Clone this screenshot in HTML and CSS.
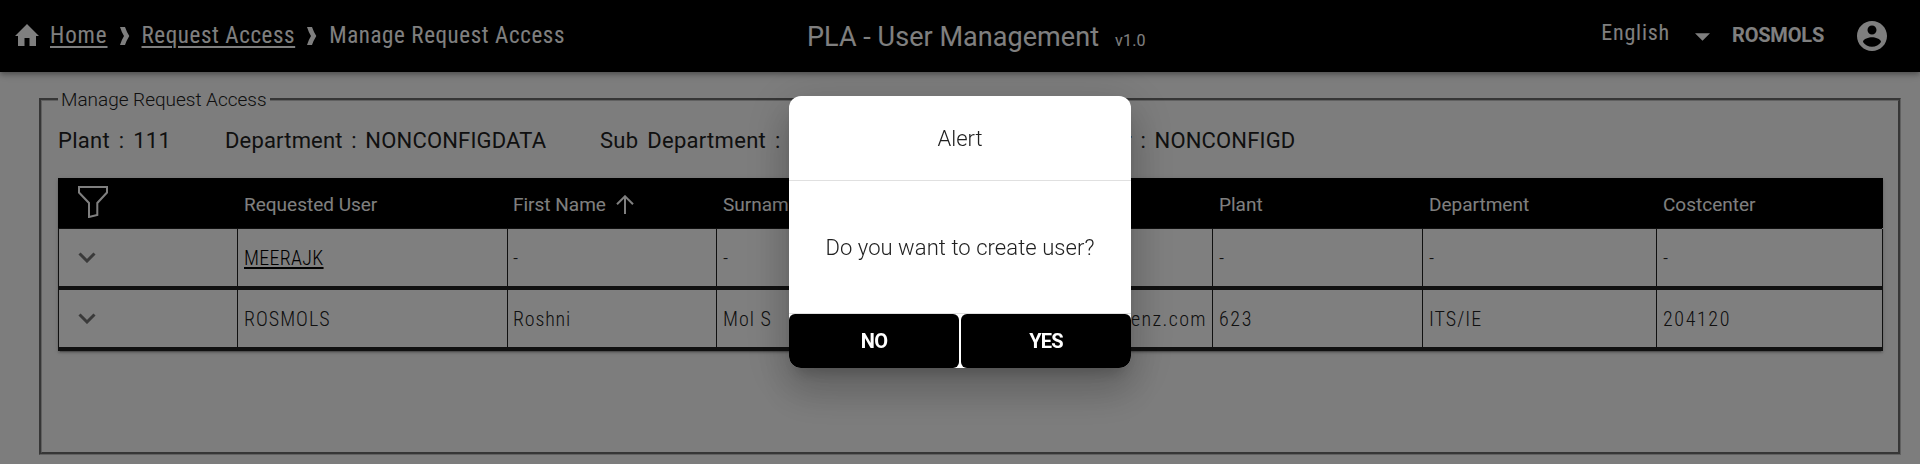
FILE: index.html
```html
<!DOCTYPE html>
<html lang="en">
<head>
<meta charset="utf-8">
<title>PLA - User Management</title>
<link rel="stylesheet" href="styles.css">
</head>
<body>
<header class="topbar">
  <nav class="breadcrumb">
    <svg class="home-icon" viewBox="0 0 24 22"><path fill="currentColor" d="M12 0 24 12h-3v10h-6.500v-8h-5v8H3V12H0z"/></svg>
    <a class="crumb crumb-home" href="#">Home</a>
    <svg class="sep" viewBox="0 0 10 18"><path fill="currentColor" d="M0 0h5Q6.500 4.500 9.300 9 6.500 13.500 5 18H0Q1.500 13 4 9 1.500 5 0 0z"/></svg>
    <a class="crumb crumb-request" href="#">Request Access</a>
    <svg class="sep" viewBox="0 0 10 18"><path fill="currentColor" d="M0 0h5Q6.500 4.500 9.300 9 6.500 13.500 5 18H0Q1.500 13 4 9 1.500 5 0 0z"/></svg>
    <span class="crumb">Manage Request Access</span>
  </nav>
  <div class="brand"><span class="brand-name">PLA - User Management</span><span class="version">v1.0</span></div>
  <div class="account">
    <span class="language">English</span>
    <svg class="caret" viewBox="0 0 14 7"><path fill="currentColor" d="M0 0h14L7 7z"/></svg>
    <span class="username">ROSMOLS</span>
    <svg class="avatar" viewBox="2 2 20 20"><path fill="currentColor" d="M12 2C6.480 2 2 6.480 2 12s4.480 10 10 10 10-4.480 10-10S17.520 2 12 2zm0 3c1.660 0 3 1.340 3 3s-1.340 3-3 3-3-1.340-3-3 1.340-3 3-3zm0 14.200c-2.500 0-4.710-1.280-6-3.220.030-1.990 4-3.080 6-3.080 1.990 0 5.970 1.090 6 3.080-1.290 1.940-3.500 3.220-6 3.220z"/></svg>
  </div>
</header>

<main class="page">
  <fieldset class="panel">
    <legend class="panel-title">Manage Request Access</legend>
    <div class="facts">
      <span class="fact fact-plant">Plant : 111</span>
      <span class="fact fact-dept">Department : NONCONFIGDATA</span>
      <span class="fact fact-sub">Sub Department :</span>
      <span class="fact">Costcenter : NONCONFIGD</span>
    </div>
    <div class="table">
      <div class="row head">
        <div class="cell"><svg class="filter" viewBox="0 0 30 32"><path d="M1 1h28v5.500L19.300 17v12L11 31V17L1 6.500z"/></svg></div>
        <div class="cell">Requested User</div>
        <div class="cell">First Name<svg class="sort" viewBox="0 0 18 19"><path d="M9 19V1.500M1 9.300l8-8 8 8"/></svg></div>
        <div class="cell">Surname</div>
        <div class="cell"></div>
        <div class="cell">Plant</div>
        <div class="cell">Department</div>
        <div class="cell">Costcenter</div>
      </div>
      <div class="row">
        <div class="cell"><svg class="expand" viewBox="0 0 18 11"><path d="m1.500 1.500 7.500 7.500 7.500-7.500"/></svg></div>
        <div class="cell"><a class="user-link" href="#">MEERAJK</a></div>
        <div class="cell">-</div>
        <div class="cell">-</div>
        <div class="cell"></div>
        <div class="cell">-</div>
        <div class="cell">-</div>
        <div class="cell">-</div>
      </div>
      <div class="row">
        <div class="cell"><svg class="expand" viewBox="0 0 18 11"><path d="m1.500 1.500 7.500 7.500 7.500-7.500"/></svg></div>
        <div class="cell">ROSMOLS</div>
        <div class="cell name">Roshni</div>
        <div class="cell">Mol S</div>
        <div class="cell email">benz.com</div>
        <div class="cell num">623</div>
        <div class="cell">ITS/IE</div>
        <div class="cell num">204120</div>
      </div>
    </div>
  </fieldset>
</main>

<div class="overlay">
  <section class="dialog" role="alertdialog">
    <h2 class="dialog-title">Alert</h2>
    <p class="dialog-text">Do you want to create user?</p>
    <div class="dialog-actions">
      <button class="btn btn-no">NO</button>
      <button class="btn btn-yes">YES</button>
    </div>
  </section>
</div>
</body>
</html>
```
FILE: styles.css
```css
* { box-sizing: border-box; }

body {
  margin: 0;
  height: 464px;
  overflow: hidden;
  background: #fafafa;
  color: #212121;
  font-family: Roboto, "Liberation Sans", sans-serif;
}

svg { display: block; flex: none; fill: none; }

/* Top bar */
.topbar {
  position: relative;
  display: grid;
  grid-template-columns: 807px 1fr auto;
  grid-template-rows: 72px;
  height: 72px;
  padding-right: 33px;
  background: #000;
  color: #fff;
  box-shadow: 0 2px 4px -1px rgba(0,0,0,.2), 0 4px 5px rgba(0,0,0,.14), 0 1px 10px rgba(0,0,0,.12);
}
.breadcrumb {
  display: flex;
  align-items: center;
  padding-left: 15px;
  font-size: 23px;
  font-stretch: 75%;
  letter-spacing: .6px;
}
.home-icon { width: 24px; height: 22px; margin: 0 11px 2px 0; }
.crumb { color: inherit; line-height: 72px; }
a.crumb { text-decoration-thickness: 2px; text-underline-offset: 3px; }
.crumb-home { letter-spacing: .9px; }
.sep { width: 10px; height: 18px; margin: 0 12px 1px; }
.brand { display: flex; align-items: baseline; line-height: 74px; }
.brand-name { font-size: 27px; letter-spacing: .05px; }
.version { margin-left: 16px; font-size: 16px; letter-spacing: .2px; }
.account { display: flex; align-items: center; }
.language { margin-bottom: 8px; font-size: 22px; font-stretch: 75%; letter-spacing: .8px; }
.caret { width: 15px; height: 8px; margin: 1px 22px 0 25px; }
.username { margin-bottom: 2px; font-size: 20px; font-weight: 700; letter-spacing: -.2px; }
.avatar { width: 30px; height: 30px; margin-left: 33px; }

/* Panel */
.page { padding: 14px 19px 0 39px; }
.panel {
  height: 369px;
  margin: 0;
  padding: 0 15px 0 16px;
  border: 3px groove #c0c0c0;
}
.panel-title {
  height: 27px;
  padding: 0 3px;
  font-size: 19px;
  line-height: 27px;
  letter-spacing: -.02px;
  font-weight: 300;
}
.facts {
  display: flex;
  height: 65px;
  font-size: 22px;
  line-height: 56px;
  letter-spacing: .17px;
  word-spacing: 3px;
  white-space: nowrap;
}
.fact-plant { width: 167px; letter-spacing: .3px; }
.fact-dept { width: 375px; }
.fact-sub { width: 423px; letter-spacing: .3px; }

/* Table */
.table {
  width: 1825px;
  background: #fff;
  font-size: 20px;
  font-stretch: 75%;
  font-weight: 300;
  letter-spacing: 1px;
  box-shadow: 0 3px 1px -2px rgba(0,0,0,.2), 0 2px 2px rgba(0,0,0,.14), 0 1px 5px rgba(0,0,0,.12);
}
.row {
  display: grid;
  grid-template-columns: 180px 270px 209px 209px 287px 210px 234px 226px;
  height: 61px;
  border-bottom: 4px solid #212121;
}
.cell {
  display: flex;
  align-items: center;
  padding-left: 6px;
  border-right: 1px solid #212121;
  white-space: nowrap;
}
.cell:first-child { padding-left: 19px; border-left: 1px solid #212121; }
.cell:nth-child(3) { padding-left: 5px; }
.head {
  height: 51px;
  width: 1824px;
  background: #000;
  color: #fff;
  font-size: 19px;
  font-stretch: 100%;
  font-weight: 400;
  letter-spacing: 0;
  border-bottom: 1px solid #212121;
}
.head .cell { border-color: #000; }
.head .cell + .cell { padding-top: 3px; }
.filter { width: 30px; height: 32px; margin-bottom: 3px; stroke: #fff; stroke-width: 2; }
.sort { width: 18px; height: 19px; margin-left: 10px; stroke: #fff; stroke-width: 2; }
.expand { width: 18px; height: 11px; margin-bottom: 1px; stroke: #757575; stroke-width: 3; }
.user-link { color: #000; letter-spacing: .3px; text-decoration-thickness: 2px; text-underline-offset: 2px; }
.email { justify-content: flex-end; padding-right: 5px; letter-spacing: 1.4px; }
.name { letter-spacing: .8px; }
.num { letter-spacing: 1.6px; }

/* Alert dialog */
.overlay {
  position: fixed;
  inset: 0;
  display: flex;
  align-items: center;
  justify-content: center;
  background: rgba(0,0,0,.5);
}
.dialog {
  display: flex;
  flex-direction: column;
  width: 342px;
  height: 272px;
  overflow: hidden;
  border-radius: 12px;
  background: #fff;
  text-align: center;
  box-shadow: 0 11px 15px -7px rgba(0,0,0,.2), 0 24px 38px 3px rgba(0,0,0,.14), 0 9px 46px 8px rgba(0,0,0,.12);
}
.dialog-title {
  height: 85px;
  margin: 0;
  border-bottom: 1px solid #e0e0e0;
  font-size: 22px;
  font-weight: 300;
  line-height: 85px;
}
.dialog-text {
  height: 133px;
  margin: 0;
  border-bottom: 1px solid #e0e0e0;
  font-size: 22px;
  font-weight: 300;
  letter-spacing: .07px;
  line-height: 133px;
}
.dialog-actions { display: grid; grid-template-columns: 1fr 1fr; gap: 2px; height: 54px; }
.btn {
  padding: 0;
  border: 0;
  border-radius: 6px;
  background: #000;
  color: #fff;
  font: 700 20px Roboto, sans-serif;
  letter-spacing: -.8px;
}
```
